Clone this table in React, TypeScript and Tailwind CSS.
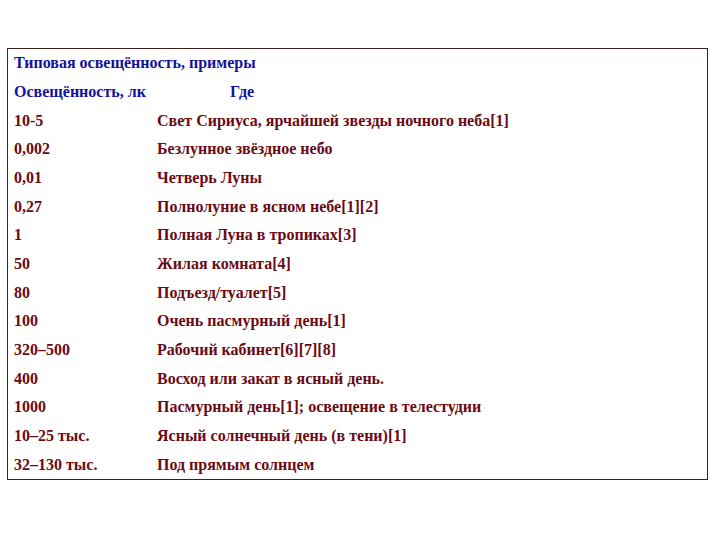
const rows: [string, string][] = [
  ['10-5', 'Свет Сириуса, ярчайшей звезды ночного неба[1]'],
  ['0,002', 'Безлунное звёздное небо'],
  ['0,01', 'Четверь Луны'],
  ['0,27', 'Полнолуние в ясном небе[1][2]'],
  ['1', 'Полная Луна в тропиках[3]'],
  ['50', 'Жилая комната[4]'],
  ['80', 'Подъезд/туалет[5]'],
  ['100', 'Очень пасмурный день[1]'],
  ['320–500', 'Рабочий кабинет[6][7][8]'],
  ['400', 'Восход или закат в ясный день.'],
  ['1000', 'Пасмурный день[1]; освещение в телестудии'],
  ['10–25 тыс.', 'Ясный солнечный день (в тени)[1]'],
  ['32–130 тыс.', 'Под прямым солнцем'],
];

export default function App() {
  return (
    <div className="h-[540px] w-[720px] bg-white pt-[48px] pl-[7px] font-['Liberation_Serif',serif] text-[16px] font-bold">
      <div className="flex h-[432px] w-[701px] flex-col border border-[#3a231c]">
        <div className="flex h-[28.7px] items-center pl-[6px] text-[#12129c]">
          Типовая освещённость, примеры
        </div>
        <div className="flex h-[28.7px] items-center pl-[6px] text-[#12129c]">
          <span className="w-[216px]">Освещённость, лк</span>
          <span>Где</span>
        </div>
        {rows.map(([value, where]) => (
          <div key={value} className="flex h-[28.7px] items-center pl-[6px] text-[#6a0b14]">
            <span className="w-[143px]">{value}</span>
            <span>{where}</span>
          </div>
        ))}
      </div>
    </div>
  );
}
